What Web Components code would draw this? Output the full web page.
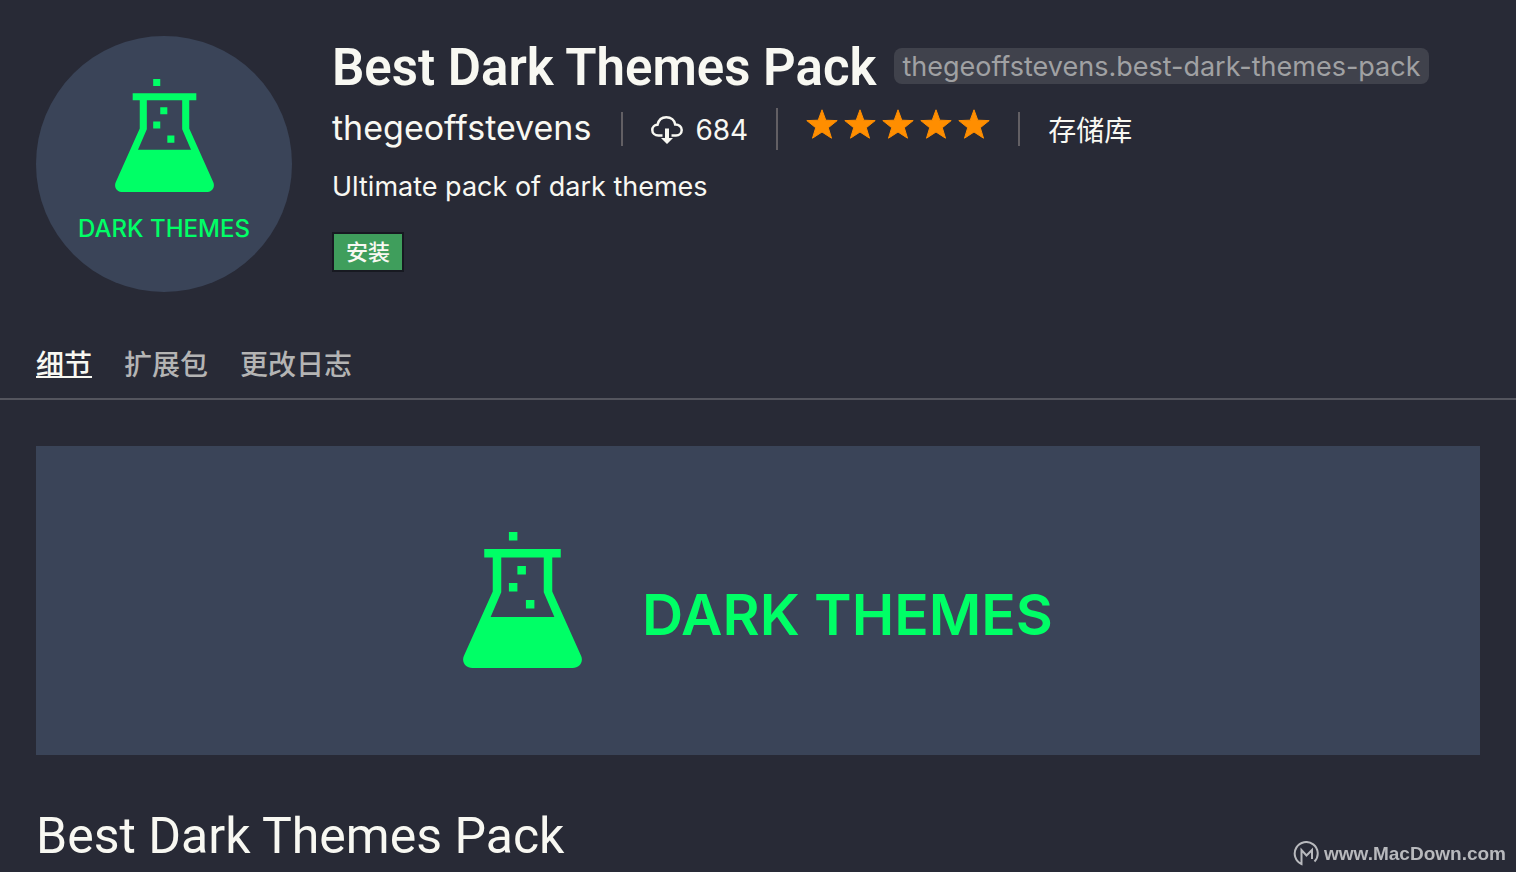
<!DOCTYPE html>
<html lang="zh-CN">
<head>
<meta charset="utf-8">
<meta name="viewport" content="width=device-width, initial-scale=1">
<title>Best Dark Themes Pack</title>
<style>
    body {
        margin: 0;
        background: #282a36;
        color: #f8f8f2;
        font-family: Inter, "Noto Sans CJK SC", sans-serif;
    }
</style>
</head>
<body>
<extension-page></extension-page>

<script>
class FlaskLogo extends HTMLElement {
    connectedCallback() {
        this.attachShadow({ mode: 'open' });
        this.shadowRoot.innerHTML = `
            <style>
                :host {
                    display: block;
                    flex: none;
                    color: #00ff66;
                }

                svg {
                    display: block;
                    width: 100%;
                }
            </style>
            <svg viewBox="0 0 14 16" fill="currentColor" aria-hidden="true">
                <path d="M5.4 0h1v1h-1zM6.4 4h1v1h-1zM5.4 6h1v1h-1zM7.4 8h1v1h-1z"/>
                <path fill-rule="evenodd" d="M2.5 2h9v1h-1v4l3.4 7.6c.3.7-.2 1.4-1 1.4H1.1c-.8 0-1.3-.7-1-1.4L3.5 7V3h-1zM4.5 3v4.1L3.25 10h7.5L9.5 7.1V3z"/>
            </svg>
        `;
    }
}

class ExtensionAvatar extends HTMLElement {
    connectedCallback() {
        this.attachShadow({ mode: 'open' });
        this.shadowRoot.innerHTML = `
            <style>
                :host {
                    display: flex;
                    flex: none;
                    flex-direction: column;
                    align-items: center;
                    gap: 21px;
                    box-sizing: border-box;
                    width: 256px;
                    height: 256px;
                    padding-top: 43px;
                    border-radius: 50%;
                    background: #3a4458;
                }

                flask-logo {
                    width: 99px;
                }

                span {
                    color: #00ff66;
                    font: 500 24px/32px Inter, sans-serif;
                    white-space: nowrap;
                }
            </style>
            <flask-logo></flask-logo>
            <span>DARK THEMES</span>
        `;
    }
}

class ExtensionBanner extends HTMLElement {
    connectedCallback() {
        this.attachShadow({ mode: 'open' });
        this.shadowRoot.innerHTML = `
            <style>
                :host {
                    display: flex;
                    align-items: center;
                    justify-content: center;
                    aspect-ratio: 1444 / 309;
                    background: #3a4458;
                }

                .lockup {
                    display: flex;
                    align-items: flex-end;
                    gap: 60px;
                    padding-bottom: 2px;
                }

                flask-logo {
                    width: 119px;
                }

                span {
                    color: #00ff66;
                    font: 600 57px/106px Inter, sans-serif;
                    white-space: nowrap;
                }
            </style>
            <div class="lockup">
                <flask-logo></flask-logo>
                <span>DARK THEMES</span>
            </div>
        `;
    }
}

class StarRating extends HTMLElement {
    connectedCallback() {
        const count = Number(this.getAttribute('value'));
        const star = `
            <svg viewBox="0 0 32 30" aria-hidden="true">
                <path d="M16 .8l3.8 10.4 11.4.4-8.9 7.1 3.2 10.5L16 23l-9.5 6.2 3.2-10.5L.8 11.6l11.4-.4z"/>
            </svg>`;
        this.attachShadow({ mode: 'open' });
        this.shadowRoot.innerHTML = `
            <style>
                :host {
                    display: flex;
                    gap: 6px;
                }

                svg {
                    width: 32px;
                    height: 30px;
                    fill: #ff8e00;
                    stroke: #ff8e00;
                    stroke-width: 1;
                    stroke-linejoin: round;
                }
            </style>
            ${star.repeat(count)}
        `;
    }
}

class ExtensionHeader extends HTMLElement {
    connectedCallback() {
        this.attachShadow({ mode: 'open' });
        this.shadowRoot.innerHTML = `
            <style>
                :host {
                    display: flex;
                    gap: 40px;
                    padding: 36px 36px 0;
                }

                a {
                    color: inherit;
                    text-decoration: none;
                }

                .details {
                    min-width: 0;
                }

                .title {
                    display: flex;
                    align-items: center;
                    gap: 18px;
                    height: 64px;
                    white-space: nowrap;
                }

                h1 {
                    margin: 0;
                    font-family: Roboto, sans-serif;
                    font-size: 51px;
                    font-weight: 600;
                    line-height: 66px;
                }

                .identifier {
                    padding: 1px 8px 0;
                    margin-bottom: 4px;
                    border-radius: 8px;
                    background: #40424c;
                    color: #a0a1a3;
                    font-size: 27px;
                    line-height: 35px;
                }

                .meta {
                    display: flex;
                    align-items: center;
                    height: 58px;
                    font-size: 28px;
                    line-height: 34px;
                    white-space: nowrap;
                }

                .meta > * + * {
                    display: flex;
                    align-items: center;
                    box-sizing: border-box;
                    height: 34px;
                    margin-left: 28px;
                    padding-left: 28px;
                    border-left: 2px solid #625f64;
                }

                .publisher {
                    margin: 0 2px 2px 0;
                    font-size: 34px;
                }

                .installs {
                    gap: 12px;
                    padding-top: 2px;
                }

                .installs svg {
                    width: 32px;
                    height: 28px;
                }

                .meta > .rating {
                    height: 42px;
                }

                star-rating {
                    margin-bottom: 10px;
                }

                .repository {
                    padding-top: 4px;
                }

                p {
                    margin: 9px 0 0;
                    font-size: 27px;
                    line-height: 40px;
                }

                button {
                    display: block;
                    margin-top: 25px;
                    padding: 0 12px;
                    border: 2px solid #171921;
                    background: #3f9e5c;
                    color: #f8f8f2;
                    font: 500 22px/36px Inter, "Noto Sans CJK SC", sans-serif;
                }
            </style>
            <extension-avatar></extension-avatar>
            <div class="details">
                <div class="title">
                    <h1>Best Dark Themes Pack</h1>
                    <span class="identifier">thegeoffstevens.best-dark-themes-pack</span>
                </div>
                <div class="meta">
                    <a class="publisher" href="#">thegeoffstevens</a>
                    <span class="installs">
                        <svg viewBox="0 0 32 28" fill="none" aria-hidden="true">
                            <path d="M11.5 19.5h-4C3.8 19.5 1.3 17 1.3 13.9c0-2.900 2.200-5 5.200-5.200C7.600 4.200 11 1.300 15.300 1.300c4.700 0 8.200 3 8.900 7.200 3.700-.1 6.500 2.300 6.500 5.500 0 3-2.400 5.500-5.700 5.500h-4.500" stroke="currentColor" stroke-width="2.5"/>
                            <path d="M14 12.5h4V22h4l-6 6-6-6h4z" fill="currentColor"/>
                        </svg>
                        684
                    </span>
                    <a class="rating" href="#" aria-label="5 / 5"><star-rating value="5"></star-rating></a>
                    <a class="repository" href="#">存储库</a>
                </div>
                <p>Ultimate pack of dark themes</p>
                <button type="button">安装</button>
            </div>
        `;
    }
}

class ExtensionTabs extends HTMLElement {
    connectedCallback() {
        this.attachShadow({ mode: 'open' });
        this.shadowRoot.innerHTML = `
            <style>
                :host {
                    display: block;
                    margin-top: 36px;
                    border-bottom: 2px solid #54555e;
                }

                nav {
                    display: flex;
                    gap: 32px;
                    height: 70px;
                    padding: 0 36px;
                }

                a {
                    color: #b4b4b4;
                    font-size: 28px;
                    font-weight: 500;
                    line-height: 74px;
                    text-decoration: none;
                }

                a[aria-current] {
                    color: #f8f8f2;
                    text-decoration: underline;
                    text-decoration-thickness: 2px;
                    text-underline-offset: 1px;
                    text-decoration-skip-ink: none;
                }
            </style>
            <nav>
                <a href="#" aria-current="page">细节</a>
                <a href="#">扩展包</a>
                <a href="#">更改日志</a>
            </nav>
        `;
    }
}

class ExtensionReadme extends HTMLElement {
    connectedCallback() {
        this.attachShadow({ mode: 'open' });
        this.shadowRoot.innerHTML = `
            <style>
                :host {
                    display: block;
                    padding: 46px 36px 0;
                }

                ::slotted(h2) {
                    margin: 48px 0 0;
                    font-family: Roboto, sans-serif;
                    font-size: 50px;
                    font-weight: 400;
                    line-height: 66px;
                }
            </style>
            <extension-banner></extension-banner>
            <slot></slot>
        `;
    }
}

class SiteMark extends HTMLElement {
    connectedCallback() {
        this.attachShadow({ mode: 'open' });
        this.shadowRoot.innerHTML = `
            <style>
                :host {
                    position: fixed;
                    right: 10px;
                    bottom: 5px;
                    display: flex;
                    align-items: center;
                    gap: 5px;
                    color: #b8b9bd;
                    font: bold 19px/26px "Liberation Sans", sans-serif;
                }

                svg {
                    width: 26px;
                    height: 26px;
                }
            </style>
            <svg viewBox="0 0 26 26" fill="none" stroke="currentColor" stroke-width="2" aria-hidden="true">
                <path d="M21.5 20.5A11.5 11.5 0 1 0 8.5 23V9l5 5.5L19 9v9"/>
            </svg>
            <span><slot></slot></span>
        `;
    }
}

class ExtensionPage extends HTMLElement {
    connectedCallback() {
        this.attachShadow({ mode: 'open' });
        this.shadowRoot.innerHTML = `
            <style>
                :host {
                    display: block;
                }
            </style>
            <extension-header></extension-header>
            <extension-tabs></extension-tabs>
            <extension-readme>
                <h2>Best Dark Themes Pack</h2>
            </extension-readme>
            <site-mark>www.MacDown.com</site-mark>
        `;
    }
}

customElements.define('flask-logo', FlaskLogo);
customElements.define('extension-avatar', ExtensionAvatar);
customElements.define('extension-banner', ExtensionBanner);
customElements.define('star-rating', StarRating);
customElements.define('extension-header', ExtensionHeader);
customElements.define('extension-tabs', ExtensionTabs);
customElements.define('extension-readme', ExtensionReadme);
customElements.define('site-mark', SiteMark);
customElements.define('extension-page', ExtensionPage);
</script>
</body>
</html>
